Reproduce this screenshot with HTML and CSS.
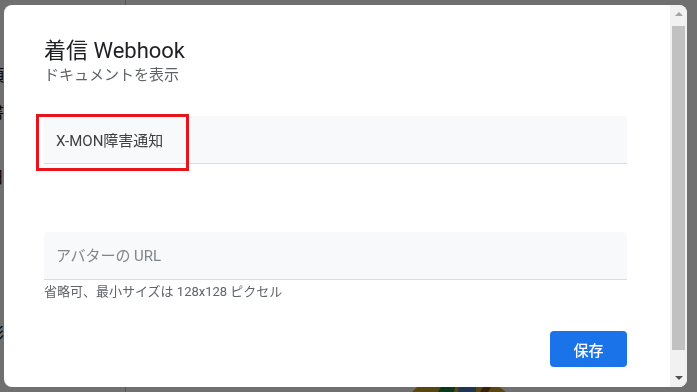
FILE: index.html
```html
<!DOCTYPE html>
<html lang="ja">
<head>
  <meta charset="UTF-8" />
  <meta name="viewport" content="width=device-width, initial-scale=1.0"/>
  <title>着信 Webhook</title>
  <link rel="stylesheet" href="styles.css">
</head>
<body>
  <!-- ページ本体（モーダルの背後） -->
  <div class="page">
    <div class="page-side">
      <span>項</span>
      <span>書</span>
      <span>日</span>
      <span>)</span>
      <span>彩</span>
      <span>(</span>
    </div>
    <div class="page-divider"></div>
    <div class="page-main">
      <svg class="page-logo" width="100" height="12" viewBox="0 0 100 12">
        <path d="M4 12 L14 2 L48 0 L84 1 L98 12 Z" fill="#c9a227"/>
        <path d="M30 12 L36 2 L48 2 L46 12 Z" fill="#188038"/>
        <path d="M50 12 L51 2 L68 2 L68 12 Z" fill="#4a78c2"/>
        <path d="M72 12 L78 2 L86 2 L80 12 Z" fill="#7a4f1c"/>
      </svg>
    </div>
  </div>

  <div class="overlay">
    <div class="dialog">
      <div class="dialog-body">
        <h1 class="dialog-title">着信 Webhook</h1>
        <p class="dialog-sub">ドキュメントを表示</p>

        <form class="webhook-form">
          <div class="field field-name">
            <input type="text" id="name" name="name" value="X-MON障害通知"/>
            <span class="highlight"></span>
          </div>

          <div class="field field-avatar">
            <input type="url" id="avatar" name="avatar" placeholder="アバターの URL"/>
          </div>
          <p class="hint">省略可、最小サイズは 128x128 ピクセル</p>

          <div class="actions">
            <button type="submit">保存</button>
          </div>
        </form>
      </div>

      <div class="scrollbar">
        <span class="arrow arrow-up"></span>
        <span class="thumb"></span>
        <span class="arrow arrow-down"></span>
      </div>
    </div>
  </div>
</body>
</html>
```

FILE: styles.css
```css
html, body {
  margin: 0;
  padding: 0;
  height: 100%;
  font-family: Roboto, "Noto Sans CJK JP", sans-serif;
  overflow: hidden;
}

.page {
  height: 392px;
  display: flex;
  overflow: hidden;
  background-color: #ffffff;
}

.page-side {
  width: 137px;
  display: flex;
  flex-direction: column;
  padding-top: 66px;
  box-sizing: border-box;
  font-size: 16px;
  line-height: 20px;
  color: #101010;
  margin-left: -12px;
}

.page-side span:nth-child(2) { margin-top: 17px; }
.page-side span:nth-child(3) { margin-top: 45px; }
.page-side span:nth-child(4) { margin-top: 68px; }
.page-side span:nth-child(5) { margin-top: 48px; }
.page-side span:nth-child(6) { margin-top: 6px; }

.page-divider {
  width: 1px;
  background-color: #c4c4c4;
}

.page-main {
  flex: 1;
  display: flex;
  align-items: flex-end;
  padding-left: 282px;
}

.page-logo {
  display: block;
}

.overlay {
  position: fixed;
  inset: 0;
  background-color: rgba(0, 0, 0, 0.56);
  padding: 5px 10px 5px 4px;
  box-sizing: border-box;
}

.dialog {
  width: 683px;
  height: 382px;
  background-color: #ffffff;
  border-radius: 8px;
  overflow: hidden;
  display: flex;
}

.dialog-body {
  flex: 1;
  padding: 32px 43px 0 40px;
  box-sizing: border-box;
}

.dialog-title {
  margin: 0;
  font-size: 22px;
  font-weight: 400;
  line-height: 28px;
  color: #202124;
}

.dialog-sub {
  margin: 0;
  font-size: 15px;
  line-height: 20px;
  color: #5f6368;
}

.webhook-form {
  margin-top: 31px;
  display: flex;
  flex-direction: column;
}

.field {
  position: relative;
}

.field input {
  width: 100%;
  height: 48px;
  box-sizing: border-box;
  padding: 0 12px;
  border: none;
  border-bottom: 1px solid #dadce0;
  border-radius: 4px 4px 0 0;
  background-color: #f8f9fa;
  font-family: inherit;
  font-size: 15px;
  color: #3c4043;
  outline: none;
}

.field input::placeholder {
  color: #80868b;
}

.field-avatar {
  margin-top: 68px;
}

.highlight {
  position: absolute;
  left: -8px;
  top: -2px;
  width: 153px;
  height: 57px;
  box-sizing: border-box;
  border: 3px solid #e8141c;
}

.hint {
  margin: 3px 0 0;
  font-size: 13px;
  line-height: 18px;
  color: #5f6368;
}

.actions {
  display: flex;
  justify-content: flex-end;
  margin-top: 30px;
}

button {
  width: 77px;
  height: 36px;
  border: none;
  border-radius: 4px;
  background-color: #1a73e8;
  color: #ffffff;
  font-family: inherit;
  font-size: 15px;
  font-weight: 500;
  cursor: pointer;
}

.scrollbar {
  width: 17px;
  background-color: #f1f1f1;
  display: flex;
  flex-direction: column;
  align-items: center;
}

.arrow {
  width: 0;
  height: 0;
  border-left: 4px solid transparent;
  border-right: 4px solid transparent;
}

.arrow-up {
  margin-top: 7px;
  border-bottom: 4px solid #a3a3a3;
}

.arrow-down {
  margin-top: auto;
  margin-bottom: 7px;
  border-top: 4px solid #505050;
}

.thumb {
  width: 13px;
  height: 324px;
  margin-top: 10px;
  background-color: #c1c1c1;
}
```
